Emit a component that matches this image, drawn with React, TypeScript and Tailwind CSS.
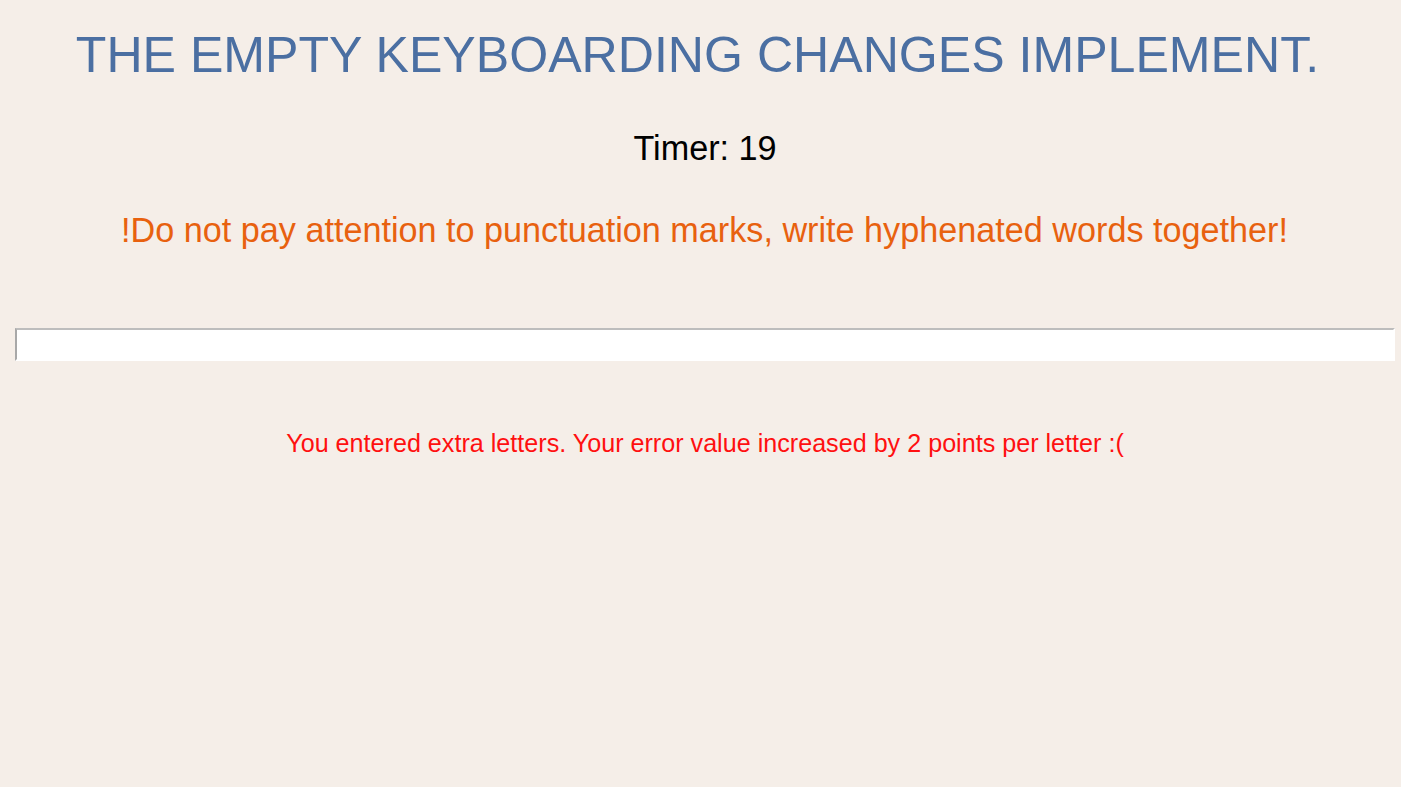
import React from "react";

export default function App() {
  return (
    <div
      className="w-[1401px] h-[787px] bg-[#f5eee8] overflow-hidden flex flex-col items-stretch"
      style={{ fontFamily: '"Liberation Sans", Arial, sans-serif' }}
    >
      <h1 className="mt-[30px] pr-[6px] h-[50px] leading-[50px] text-[50.1px] text-center text-[#4b6fa2] font-normal whitespace-nowrap">
        THE EMPTY KEYBOARDING CHANGES IMPLEMENT.
      </h1>
      <div className="mt-[51px] pl-[9px] h-[34px] leading-[34px] text-[34.2px] text-center text-black">
        Timer: 19
      </div>
      <div className="mt-[48px] pl-[8px] h-[34px] leading-[34px] text-[34.2px] text-center text-[#e8610f] whitespace-nowrap">
        !Do not pay attention to punctuation marks, write hyphenated words together!
      </div>
      <div className="mt-[81px] pl-[15px]">
        <input
          type="text"
          className="block w-[1380px] h-[33px] bg-white border-t-2 border-l-2 border-b-2 border-r-2 border-t-[#bdbdbd] border-l-[#a8a8a8] border-b-white border-r-white outline-none"
        />
      </div>
      <div className="mt-[70px] pl-[9px] h-[25px] leading-[25px] text-[25.15px] text-center text-[#ff1010] whitespace-nowrap">
        You entered extra letters. Your error value increased by 2 points per letter :(
      </div>
    </div>
  );
}
